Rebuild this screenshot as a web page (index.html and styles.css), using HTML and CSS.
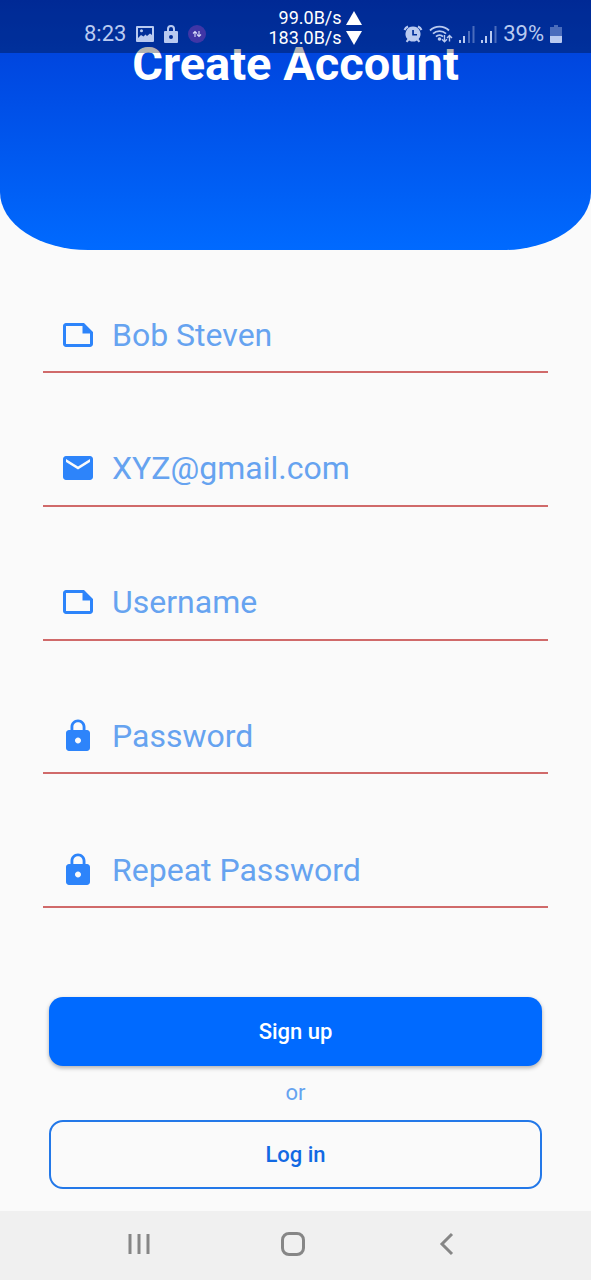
FILE: index.html
```html
<!DOCTYPE html>
<html lang="en">
<head>
<meta charset="utf-8">
<meta name="viewport" content="width=device-width, initial-scale=1">
<title>Create Account</title>
<link rel="stylesheet" href="styles.css">
</head>
<body>
<div class="screen">
  <div class="status-bar">
    <div class="status-left">
      <span class="clock">8:23</span>
      <svg class="status-image" width="18" height="18" viewBox="0 0 18 18"><path fill="currentColor" fill-rule="evenodd" d="M1 1h16a1 1 0 0 1 1 1v14a1 1 0 0 1-1 1H1a1 1 0 0 1-1-1V2a1 1 0 0 1 1-1Zm1 2v10l3-3 2.500 1.500 2-2 1.500 1.500 3-2.500L16 10V3Zm3.500 1.200a1.500 1.500 0 1 1 0 3 1.500 1.500 0 0 1 0-3Z"/></svg>
      <svg class="status-lock" width="14" height="18" viewBox="0 0 14 18"><path fill="currentColor" fill-rule="evenodd" d="M1 6h2V4a4 4 0 0 1 8 0v2h2a1 1 0 0 1 1 1v10a1 1 0 0 1-1 1H1a1 1 0 0 1-1-1V7a1 1 0 0 1 1-1Zm4 0h4V4a2 2 0 0 0-4 0Zm2 4a2 2 0 1 0 0 4 2 2 0 0 0 0-4Z"/></svg>
      <svg class="status-app" width="18" height="18" viewBox="0 0 18 18"><circle cx="9" cy="9" r="9" fill="#4036a6"/><path d="M7 12V6.500M5 8.500l2-2 2 2M11 6v5.500M9 9.500l2 2 2-2" fill="none" stroke="#d7dcf8" stroke-width="1.100"/></svg>
    </div>
    <div class="speeds">
      <div class="speed">99.0B/s<svg width="16" height="14" viewBox="0 0 16 14"><path d="M8 0l8 14H0Z" fill="currentColor"/></svg></div>
      <div class="speed">183.0B/s<svg width="16" height="14" viewBox="0 0 16 14"><path d="M8 14L0 0h16Z" fill="currentColor"/></svg></div>
    </div>
    <div class="status-right">
      <svg width="20" height="18" viewBox="0 0 20 18"><path fill="currentColor" fill-rule="evenodd" d="M10 1.500a7.500 7.500 0 0 1 5.600 12.500l1.600 2.300-1.500 1.200-1.800-2.100a7.500 7.500 0 0 1-7.800 0l-1.800 2.100-1.500-1.200L4.400 14A7.500 7.500 0 0 1 10 1.500ZM9.200 5v5.500H14V8.900h-3.100V5Z"/><path d="M1.500 5a7 7 0 0 1 3.500-3.500M18.500 5A7 7 0 0 0 15 1.500" fill="none" stroke="currentColor" stroke-width="2"/></svg>
      <svg width="24" height="18" viewBox="0 0 24 18"><g fill="none" stroke="currentColor" stroke-width="1.800"><path d="M1 5.500a13.500 13.500 0 0 1 19 0M4 8.700a9.500 9.500 0 0 1 13 0M7 11.700a5 5 0 0 1 7 0"/><path stroke-width="1.400" d="M15.500 10v6.500M13 14.200l2.500 2.500 2.500-2.500M20.500 16.500V10.800M18 13l2.500-2.500L23 13"/></g><circle cx="10.500" cy="14" r="1.800" fill="currentColor"/></svg>
      <svg width="16" height="17" viewBox="0 0 16 17" fill="currentColor"><path d="M0 14h2v3H0zM4 10h2v7H4z"/><path opacity=".4" d="M9 5h2v12H9zM13.500 0h2v17h-2z"/></svg>
      <svg width="16" height="17" viewBox="0 0 16 17" fill="currentColor"><path d="M0 14h2v3H0zM4 10h2v7H4zM9 5h2v12H9z"/><path opacity=".4" d="M13.500 0h2v17h-2z"/></svg>
      <span class="battery-text">39%</span>
      <svg width="12" height="18" viewBox="0 0 12 18" fill="currentColor"><path opacity=".4" d="M4 0h4v2h4v9H0V2h4z"/><path d="M0 11h12v6a1 1 0 0 1-1 1H1a1 1 0 0 1-1-1z"/></svg>
    </div>
  </div>

  <header class="hero"><h1 class="title">Create Account</h1></header>

  <form class="form">
    <div class="fields">
      <label class="field">
        <svg class="icon" viewBox="0 0 24 24"><path d="M16 4H4c-1.100 0-2 .9-2 2v12.010c0 1.100.9 1.990 2 1.990h16c1.100 0 2-.9 2-2v-8l-6-6zM4 18.010V6h11v5h5v7.010H4z"/></svg>
        <input class="input" type="text" aria-label="Full name" placeholder="Bob Steven">
      </label>
      <label class="field">
        <svg class="icon" viewBox="0 0 24 24"><path d="M20 4H4c-1.100 0-1.990.9-1.990 2L2 18c0 1.100.9 2 2 2h16c1.100 0 2-.9 2-2V6c0-1.100-.9-2-2-2zm0 4l-8 5-8-5V6l8 5 8-5v2z"/></svg>
        <input class="input" type="email" aria-label="Email" placeholder="XYZ@gmail.com">
      </label>
      <label class="field">
        <svg class="icon" viewBox="0 0 24 24"><path d="M16 4H4c-1.100 0-2 .9-2 2v12.010c0 1.100.9 1.990 2 1.990h16c1.100 0 2-.9 2-2v-8l-6-6zM4 18.010V6h11v5h5v7.010H4z"/></svg>
        <input class="input" type="text" aria-label="Username" placeholder="Username">
      </label>
      <label class="field">
        <svg class="icon" viewBox="0 0 24 24"><path d="M18 8h-1V6c0-2.760-2.240-5-5-5S7 3.240 7 6v2H6c-1.100 0-2 .9-2 2v10c0 1.100.9 2 2 2h12c1.100 0 2-.9 2-2V10c0-1.100-.9-2-2-2zm-6 9c-1.100 0-2-.9-2-2s.9-2 2-2 2 .9 2 2-.9 2-2 2zm3.100-9H8.900V6c0-1.710 1.390-3.100 3.100-3.100 1.710 0 3.100 1.390 3.100 3.100v2z"/></svg>
        <input class="input" type="password" aria-label="Password" placeholder="Password">
      </label>
      <label class="field">
        <svg class="icon" viewBox="0 0 24 24"><path d="M18 8h-1V6c0-2.760-2.240-5-5-5S7 3.240 7 6v2H6c-1.100 0-2 .9-2 2v10c0 1.100.9 2 2 2h12c1.100 0 2-.9 2-2V10c0-1.100-.9-2-2-2zm-6 9c-1.100 0-2-.9-2-2s.9-2 2-2 2 .9 2 2-.9 2-2 2zm3.100-9H8.900V6c0-1.710 1.390-3.100 3.100-3.100 1.710 0 3.100 1.390 3.100 3.100v2z"/></svg>
        <input class="input" type="password" aria-label="Repeat password" placeholder="Repeat Password">
      </label>
    </div>
    <div class="actions">
      <button class="button button-primary" type="submit">Sign up</button>
      <span class="or">or</span>
      <button class="button button-outline" type="button">Log in</button>
    </div>
  </form>

  <nav class="nav-bar" aria-label="System navigation">
    <button class="nav-button" type="button" aria-label="Recent apps"><svg width="24" height="24" viewBox="0 0 24 24"><path d="M3 2v20M12 2v20M21 2v20"/></svg></button>
    <button class="nav-button" type="button" aria-label="Home"><svg width="24" height="24" viewBox="0 0 24 24"><rect x="1.500" y="1.500" width="21" height="21" rx="6.500"/></svg></button>
    <button class="nav-button" type="button" aria-label="Back"><svg width="24" height="24" viewBox="0 0 24 24"><path d="M17 2L7 12l10 10"/></svg></button>
  </nav>
</div>
</body>
</html>
```
FILE: styles.css
```css
* { box-sizing: border-box; }

body {
  margin: 0;
  background: #fafafa;
  font-family: Roboto, sans-serif;
}

svg { display: block; flex: none; }

.screen {
  position: relative;
  display: flex;
  flex-direction: column;
  min-height: 100vh;
}

.status-bar {
  position: absolute;
  inset: 0 0 auto;
  display: flex;
  align-items: flex-start;
  height: 53px;
  padding: 8px 29px 0 84px;
  background: rgba(0, 0, 0, 0.3);
  color: #b9caf0;
  font-size: 22px;
  line-height: 24px;
}

.status-left,
.status-right {
  display: flex;
  align-items: center;
  padding-top: 14px;
}

.status-left { gap: 10px; }

.speeds {
  margin-left: 62px;
  color: #fff;
  font-size: 18px;
  line-height: 20px;
}

.speed {
  display: flex;
  align-items: center;
  justify-content: flex-end;
  gap: 4px;
}

.status-right {
  gap: 6px;
  margin-left: auto;
}

.hero {
  height: 250px;
  padding-top: 36px;
  border-radius: 0 0 88px 88px / 0 0 58px 58px;
  background: linear-gradient(#003cd6, #006aff);
}

.title {
  margin: 0;
  color: #fff;
  font-size: 47px;
  font-weight: 700;
  line-height: 56px;
  text-align: center;
}

.form {
  display: flex;
  flex: 1;
  flex-direction: column;
  padding: 48px 43px 22px;
}

.fields {
  display: flex;
  flex: 1;
  flex-direction: column;
  justify-content: space-between;
}

.field {
  display: flex;
  align-items: center;
  gap: 16px;
  height: 75px;
  padding-left: 17px;
  border-bottom: 2px solid #d06a6a;
}

.icon {
  width: 36px;
  height: 36px;
  fill: #2d84fa;
}

.input {
  flex: 1;
  min-width: 0;
  padding: 0;
  border: 0;
  outline: 0;
  background: none;
  color: #1a73e8;
  font: 32px/40px Roboto, sans-serif;
}

.input::placeholder {
  color: #66a3f0;
  opacity: 1;
}

.actions {
  display: flex;
  flex-direction: column;
  padding: 89px 6px 0;
}

.button {
  height: 69px;
  border: 0;
  border-radius: 14px;
  font: 500 22px/28px Roboto, sans-serif;
}

.button-primary {
  background: #006aff;
  box-shadow: 0 2px 4px rgba(0, 0, 0, 0.3);
  color: #fff;
}

.button-outline {
  border: 2px solid #2378e8;
  background: none;
  color: #1269e3;
}

.or {
  color: #66a3f0;
  font-size: 22px;
  line-height: 54px;
  text-align: center;
}

.nav-bar {
  display: flex;
  align-items: center;
  justify-content: space-between;
  height: 69px;
  padding: 0 132px 4px 127px;
  background: #f0f0f0;
}

.nav-button {
  padding: 0;
  border: 0;
  background: none;
}

.nav-button svg {
  fill: none;
  stroke: #868686;
  stroke-width: 3;
}
```
